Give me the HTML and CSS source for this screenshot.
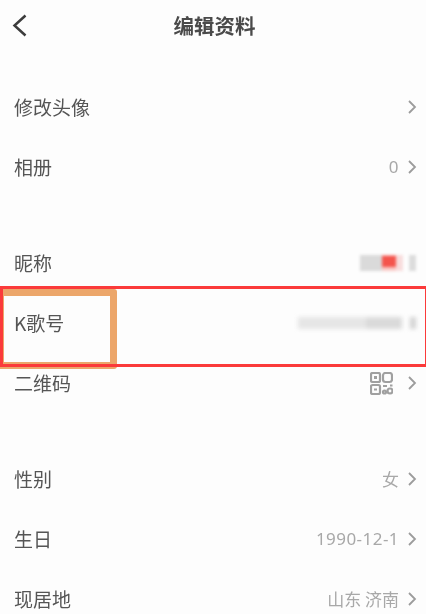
FILE: index.html
```html
<!DOCTYPE html>
<html lang="zh">
<head>
<meta charset="utf-8">
<title>编辑资料</title>
<link rel="stylesheet" href="styles.css">
</head>
<body>
<div class="page">
  <div class="content">
  <header class="header">
    <svg class="back" viewBox="0 0 16 24" width="16" height="24"><path d="M14.500 2.500 L3.500 12.500 L14.500 22.500" fill="none" stroke="#3c3c3c" stroke-width="2.500"/></svg>
    <h1 class="title">编辑资料</h1>
  </header>
  <section class="group">
    <div class="row"><span class="label">修改头像</span><span class="right"><svg class="chev" viewBox="0 0 10 16"><path d="M2 2 L8 8 L2 14"/></svg></span></div>
    <div class="row"><span class="label">相册</span><span class="right"><span class="val num">0</span><svg class="chev" viewBox="0 0 10 16"><path d="M2 2 L8 8 L2 14"/></svg></span></div>
  </section>
  <section class="group">
    <div class="row"><span class="label">昵称</span><span class="right mosaic-nick"><i class="m1"></i><i class="m2"></i><i class="m3"></i><i class="m4"></i></span></div>
    <div class="row"><span class="label">K歌号</span><span class="right mosaic-id"><i class="n1"></i><i class="n2"></i><i class="n3"></i></span></div>
    <div class="row"><span class="label">二维码</span><span class="right">
      <svg class="qr" viewBox="0 0 23 23" width="23" height="23" fill="none" stroke="#a0a0a0" stroke-width="2.200">
        <rect x="1" y="1" width="9" height="9" rx="1.500"/><rect x="13" y="1" width="9" height="9" rx="2.500"/><rect x="1" y="13" width="9" height="9" rx="1.500"/>
        <rect x="4" y="4" width="3" height="3" fill="#a0a0a0" stroke="none"/>
        <path d="M13 14 h4 M20 13.500 h2.500 M4 17.500 h3"/>
        <circle cx="14.500" cy="20" r="1.500"/><circle cx="20" cy="19" r="2.500"/>
      </svg>
      <svg class="chev" viewBox="0 0 10 16"><path d="M2 2 L8 8 L2 14"/></svg></span></div>
  </section>
  <section class="group">
    <div class="row"><span class="label">性别</span><span class="right"><span class="val">女</span><svg class="chev" viewBox="0 0 10 16"><path d="M2 2 L8 8 L2 14"/></svg></span></div>
    <div class="row"><span class="label">生日</span><span class="right"><span class="val num">1990-12-1</span><svg class="chev" viewBox="0 0 10 16"><path d="M2 2 L8 8 L2 14"/></svg></span></div>
    <div class="row"><span class="label">现居地</span><span class="right"><span class="val">山东 济南</span><svg class="chev" viewBox="0 0 10 16"><path d="M2 2 L8 8 L2 14"/></svg></span></div>
  </section>
  </div>
  <div class="mark-orange"></div>
  <div class="mark-red"></div>
</div>
</body>
</html>
```
FILE: styles.css
```css
* { box-sizing: border-box; }
html, body { margin: 0; padding: 0; height: 100%; overflow: hidden; }
body {
  background: #fdfdfd;
  font-family: "Noto Sans CJK SC", "Noto Sans", sans-serif;
  color: #555;
}
.page { position: relative; width: 426px; height: 614px; overflow: hidden; }
.content { filter: blur(0.400px); }
.header {
  position: relative;
  height: 50px;
  margin-bottom: 27px;
  display: flex;
  align-items: center;
  justify-content: center;
  padding-left: 3px;
}
.back { position: absolute; left: 11px; top: 13px; }
.title { margin: 0; font-size: 20.500px; font-weight: 700; color: #4a4a4a; line-height: 1; }
.group { margin-bottom: 36px; }
.row {
  height: 60px;
  display: flex;
  align-items: center;
  justify-content: space-between;
  padding: 0 9px 0 14px;
}
.label { font-size: 19px; line-height: 1; color: #555; margin-bottom: 2px; }
.right { display: flex; align-items: center; gap: 8px; }
.val { font-size: 17px; line-height: 1; color: #a8a8a8; margin-bottom: 2px; }
.num { font-family: "Noto Sans", sans-serif; font-size: 17px; letter-spacing: 0.450px; }
.chev { width: 10px; height: 16px; fill: none; stroke: #9c9c9c; stroke-width: 1.800; }
.qr { margin-right: 6px; }
.mosaic-nick { gap: 0; padding-right: 1px; height: 22px; filter: blur(1.800px); }
.mosaic-nick i { display: block; height: 16px; }
.m1 { width: 22px; background: #dadada; }
.m2 { width: 14px; height: 22px; background: linear-gradient(#f7a9a5 0 8%, #f4544c 8% 72%, #f9c9c6 72%); }
.m3 { width: 7px; background: #f8dcdc; margin-right: 6px; }
.m4 { width: 7px; background: #dcdcdc; }
.mosaic-id { gap: 0; padding-right: 1px; height: 14px; filter: blur(2px); }
.mosaic-id i { display: block; height: 12px; }
.n1 { width: 68px; background: #e6e6e6; }
.n2 { width: 36px; background: #dadada; margin-right: 8px; }
.n3 { width: 6px; background: #d2d2d2; }
.mark-orange {
  position: absolute;
  left: -3px;
  top: 289px;
  width: 120px;
  height: 80px;
  border: 7px solid #eca66a;
  border-radius: 3px;
}
.mark-red {
  position: absolute;
  left: 0;
  top: 286px;
  width: 426px;
  height: 81px;
  border: 3px solid #fb3a3a;
  border-right-width: 1.500px;
}
```
